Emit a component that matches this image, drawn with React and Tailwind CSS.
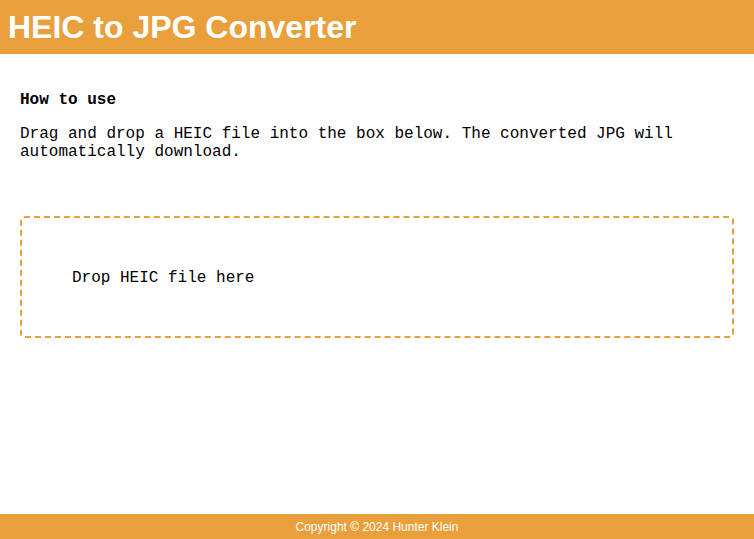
import React from "react";

export default function App() {
  return (
    <div className="min-h-screen flex flex-col bg-white">
      <header className="h-[54px] bg-[#e99f3c] flex items-center px-2">
        <h1 className="text-[32px] font-bold text-white leading-none font-['Liberation_Sans',Arial,sans-serif]">
          HEIC to JPG Converter
        </h1>
      </header>

      <main className="flex-1 px-5 pt-[37px] font-['Liberation_Mono','Courier_New',monospace] text-black text-base leading-[18px]">
        <h3 className="font-bold">How to use</h3>
        <p className="mt-4">
          Drag and drop a HEIC file into the box below. The converted JPG will automatically download.
        </p>

        <div className="mt-[55px] border-2 border-dashed border-[#e99f3c] rounded-sm px-[50px] pt-[51px] h-[122px]">
          Drop HEIC file here
        </div>
      </main>

      <footer className="h-[25px] bg-[#e99f3c] flex items-center justify-center text-white text-xs font-['Liberation_Sans',Arial,sans-serif]">
        Copyright © 2024 Hunter Klein
      </footer>
    </div>
  );
}
